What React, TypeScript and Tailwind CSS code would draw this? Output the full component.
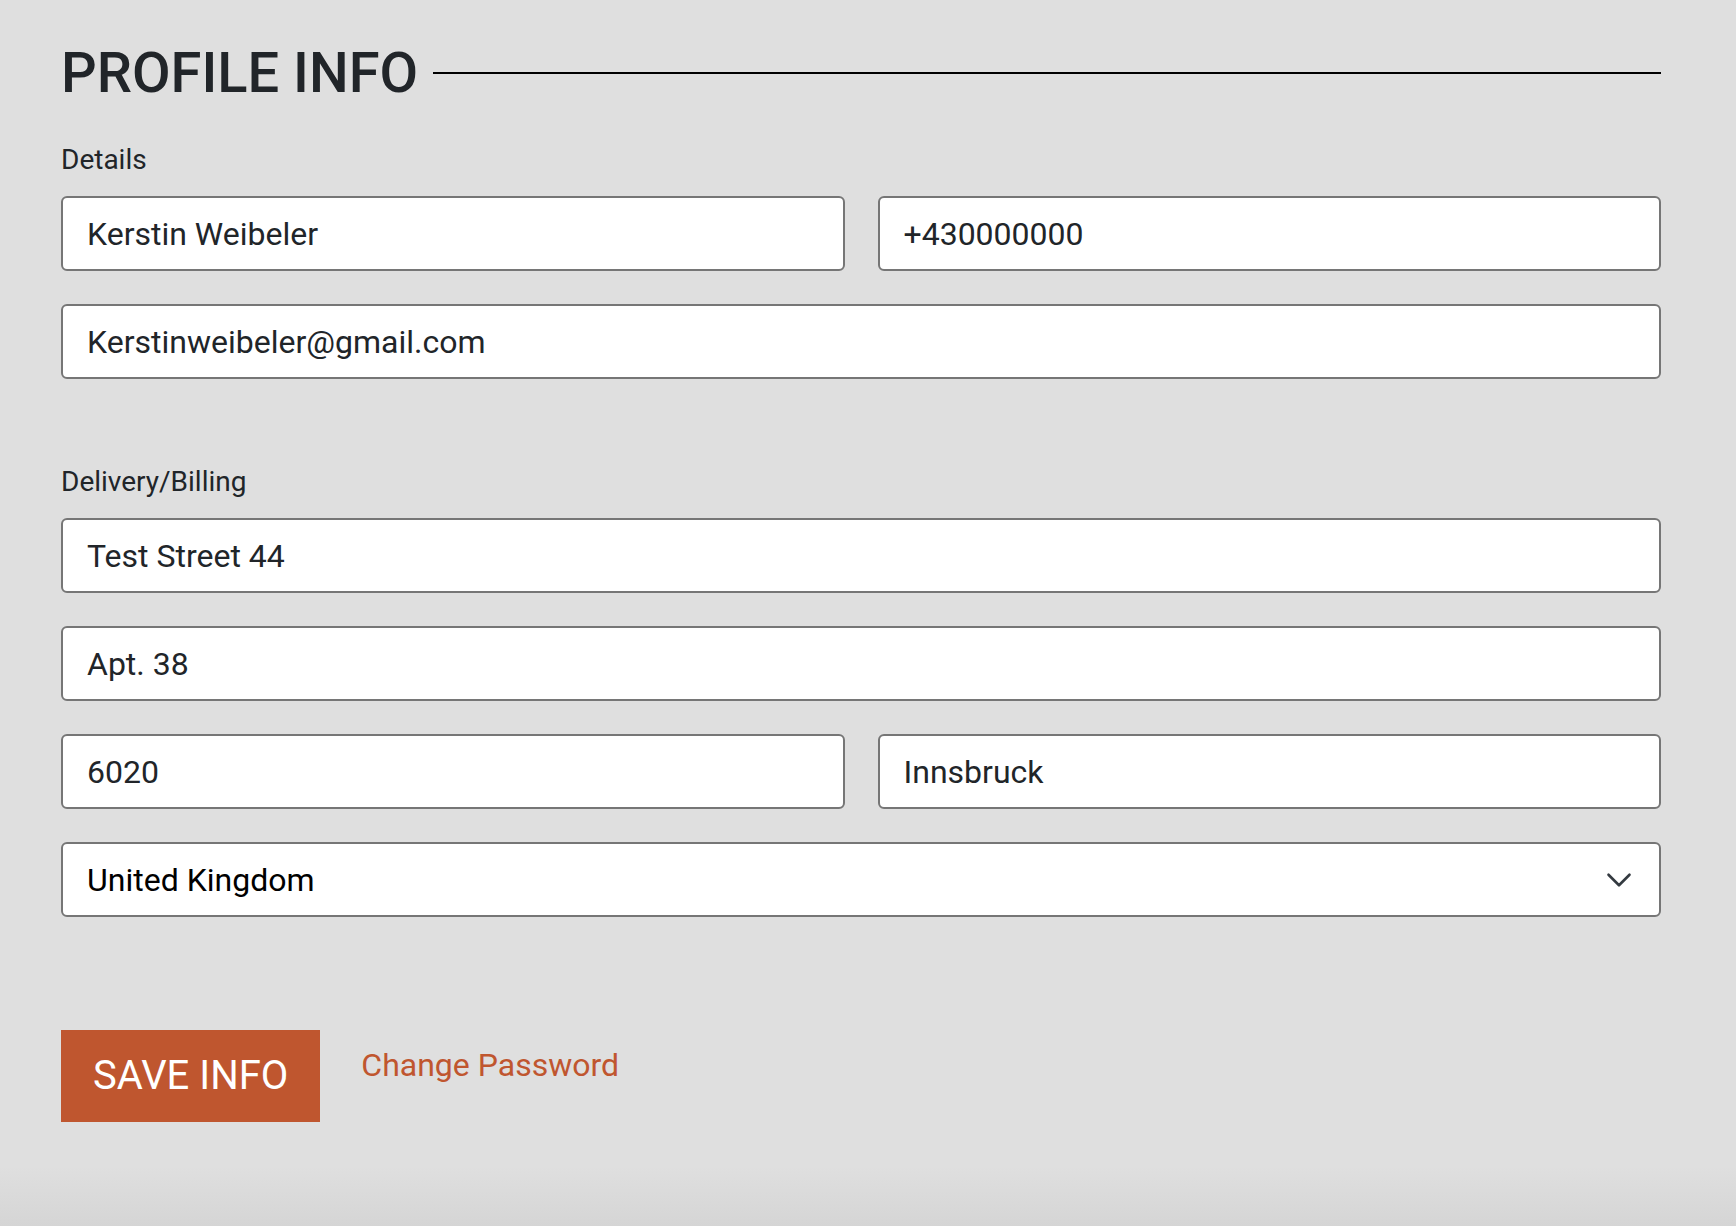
import { useState } from "react";

const font = { fontFamily: "Roboto, 'Liberation Sans', sans-serif" };

function Field({ value }: { value: string }) {
  const [v, setV] = useState(value);
  return (
    <input
      value={v}
      onChange={(e) => setV(e.target.value)}
      className="block w-full h-[75px] rounded-md border-2 border-[#767676] bg-white px-[24px] text-[32px] text-[#212529] outline-none"
      style={font}
    />
  );
}

export default function App() {
  const [country, setCountry] = useState("United Kingdom");

  return (
    <div
      className="min-h-screen w-full bg-[linear-gradient(to_bottom,#dfdfdf_calc(100%-60px),#d5d5d5)] pl-[61px] pt-[45px] pb-[104px]"
      style={font}
    >
      <div className="w-[1600px]">
        {/* heading */}
        <div className="flex items-center gap-[15px]">
          <h1 className="text-[56px] leading-[56px] font-medium text-[#212529] whitespace-nowrap">PROFILE INFO</h1>
          <div className="h-[2px] flex-1 bg-black" />
        </div>

        {/* details */}
        <p className="mt-[43px] mb-[20px] text-[28px] leading-[32px] text-[#212529]">Details</p>
        <div className="flex flex-col gap-[33px]">
          <div className="grid grid-cols-2 gap-[33px]">
            <Field value="Kerstin Weibeler" />
            <Field value="+430000000" />
          </div>
          <Field value="Kerstinweibeler@gmail.com" />
        </div>

        {/* delivery */}
        <p className="mt-[87px] mb-[20px] text-[28px] leading-[32px] text-[#212529]">Delivery/Billing</p>
        <div className="flex flex-col gap-[33px]">
          <Field value="Test Street 44" />
          <Field value="Apt. 38" />
          <div className="grid grid-cols-2 gap-[33px]">
            <Field value="6020" />
            <Field value="Innsbruck" />
          </div>
          <div className="relative">
            <select
              value={country}
              onChange={(e) => setCountry(e.target.value)}
              className="block w-full h-[75px] appearance-none rounded-md border-2 border-[#767676] bg-white px-[24px] text-[32px] text-black outline-none"
              style={font}
            >
              <option>Austria</option>
              <option>Germany</option>
              <option>United Kingdom</option>
            </select>
            <svg
              viewBox="0 0 16 16"
              className="pointer-events-none absolute right-[28px] top-1/2 h-[28px] w-[28px] -translate-y-1/2"
              fill="none"
              stroke="#343a40"
              strokeWidth="1.5"
              strokeLinecap="round"
              strokeLinejoin="round"
            >
              <path d="m2 5 6 6 6-6" />
            </svg>
          </div>
        </div>

        {/* actions */}
        <div className="mt-[113px] flex items-start gap-[41px]">
          <button className="flex h-[92px] items-center bg-[#bf562f] px-8 text-[40px] leading-none text-white">
            SAVE INFO
          </button>
          <a href="#" className="mt-[11px] text-[32px] leading-[48px] text-[#c0562f]">
            Change Password
          </a>
        </div>
      </div>
    </div>
  );
}
